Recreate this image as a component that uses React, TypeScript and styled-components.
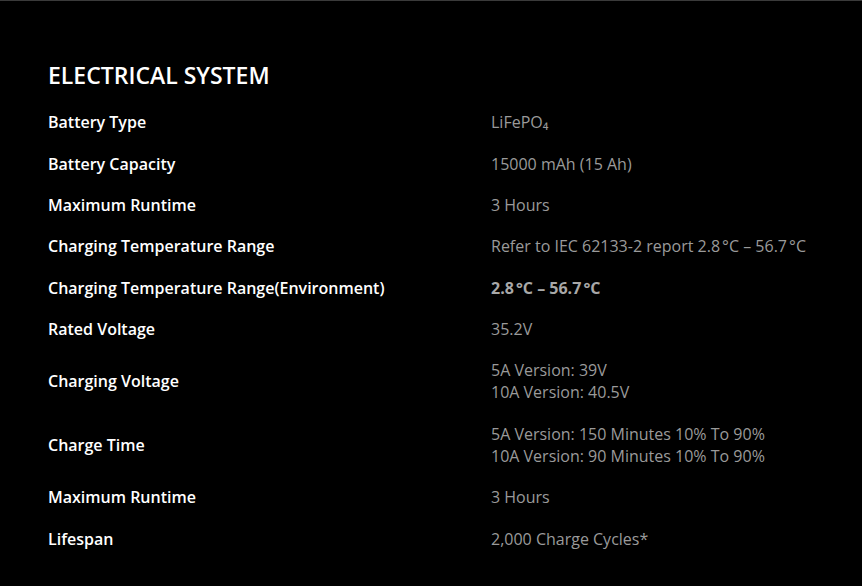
import styled, { createGlobalStyle } from "styled-components";

const GlobalStyle = createGlobalStyle`
  html, body {
    margin: 0;
    padding: 0;
    background: #000;
  }
  body {
    font-family: "Open Sans", "Liberation Sans", sans-serif;
  }
`;

type Spec = {
  label: string;
  lines: string[];
  strong?: boolean;
};

const specs: Spec[] = [
  { label: "Battery Type", lines: ["LiFePO₄"] },
  { label: "Battery Capacity", lines: ["15000 mAh (15 Ah)"] },
  { label: "Maximum Runtime", lines: ["3 Hours"] },
  {
    label: "Charging Temperature Range",
    lines: ["Refer to IEC 62133-2 report 2.8\u202f°C – 56.7\u202f°C"],
  },
  {
    label: "Charging Temperature Range(Environment)",
    lines: ["2.8\u202f°C – 56.7\u202f°C"],
    strong: true,
  },
  { label: "Rated Voltage", lines: ["35.2V"] },
  {
    label: "Charging Voltage",
    lines: ["5A Version: 39V", "10A Version: 40.5V"],
  },
  {
    label: "Charge Time",
    lines: [
      "5A Version: 150 Minutes 10% To 90%",
      "10A Version: 90 Minutes 10% To 90%",
    ],
  },
  { label: "Maximum Runtime", lines: ["3 Hours"] },
  { label: "Lifespan", lines: ["2,000 Charge Cycles*"] },
];

export default function App() {
  return (
    <>
      <GlobalStyle />
      <StyledSection>
        <StyledHeading>ELECTRICAL SYSTEM</StyledHeading>
        <StyledTable>
          {specs.map((spec, i) => (
            <StyledRow key={i}>
              <StyledLabel>{spec.label}</StyledLabel>
              <StyledValue $strong={spec.strong}>
                {spec.lines.map((line, j) => (
                  <div key={j}>{line}</div>
                ))}
              </StyledValue>
            </StyledRow>
          ))}
        </StyledTable>
      </StyledSection>
    </>
  );
}

const StyledSection = styled.section`
  box-sizing: border-box;
  min-height: 586px;
  width: 100%;
  background: #000;
  border-top: 1px solid #3a3a3a;
  padding: 58px 48px 0 48px;
`;

const StyledHeading = styled.h2`
  margin: 0 0 10.5px 0;
  font-size: 23px;
  line-height: 32px;
  font-weight: 600;
  color: #fff;
  letter-spacing: 0;
`;

const StyledTable = styled.div`
  display: flex;
  flex-direction: column;
`;

const StyledRow = styled.div`
  display: grid;
  grid-template-columns: 443px 1fr;
  align-items: center;
  padding: 9.7px 0;
`;

const StyledLabel = styled.div`
  font-size: 16px;
  line-height: 22px;
  font-weight: 600;
  color: #fff;
`;

const StyledValue = styled.div<{ $strong?: boolean }>`
  font-size: 16px;
  line-height: 22px;
  font-weight: ${(p) => (p.$strong ? 700 : 400)};
  color: ${(p) => (p.$strong ? "#a8a8a8" : "#9a9a9a")};
`;
